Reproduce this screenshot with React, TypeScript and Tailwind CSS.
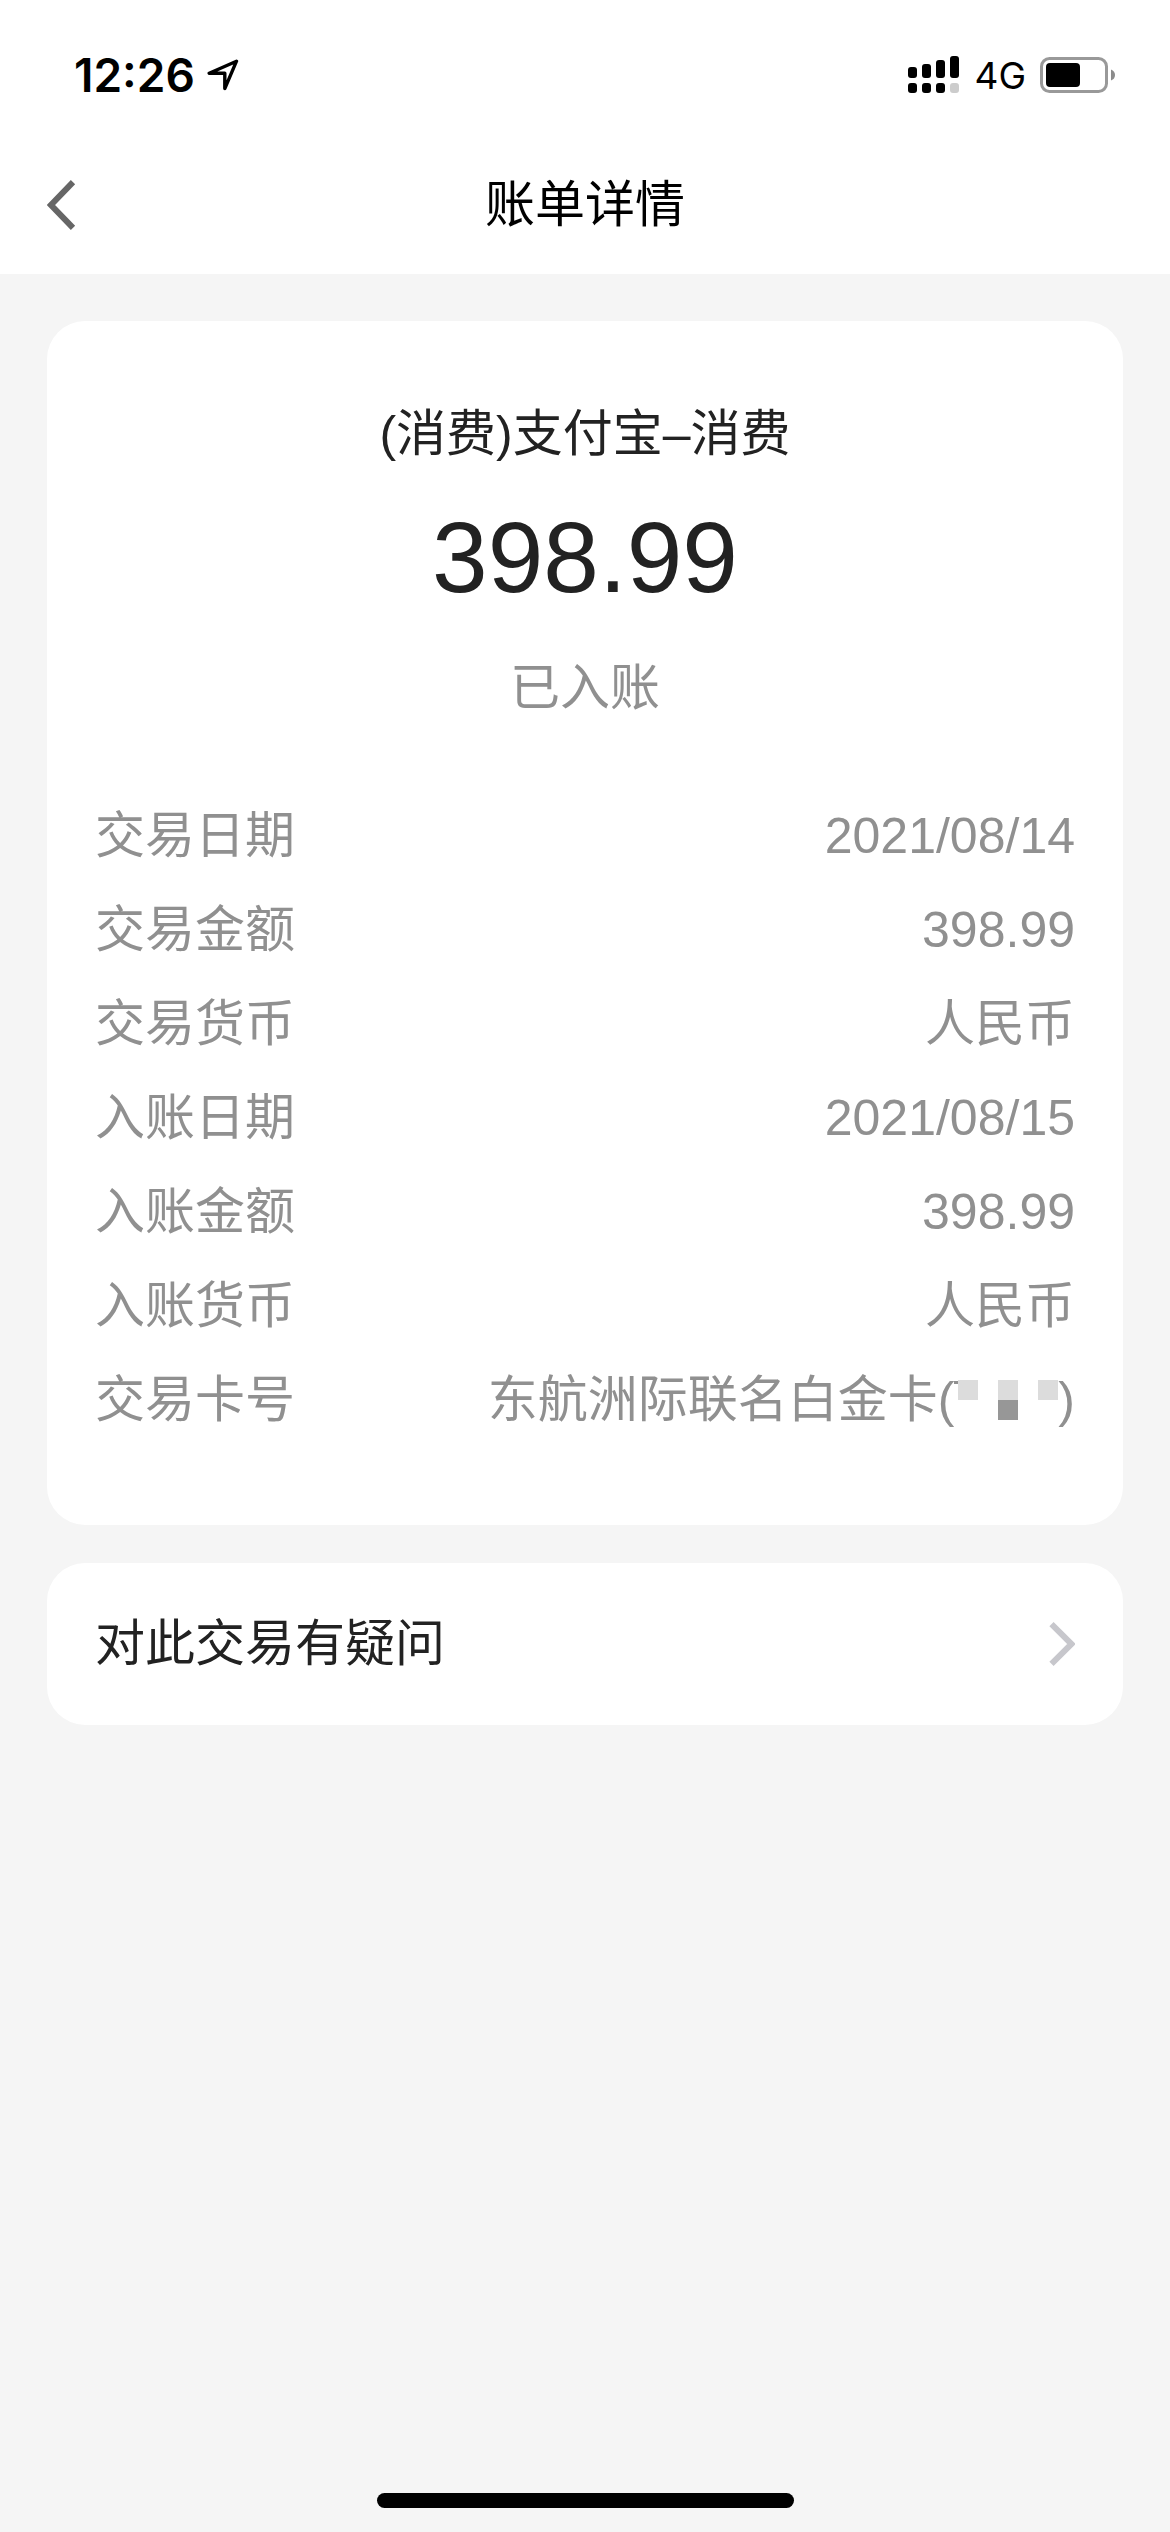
import React from "react";

const details = [
  { label: "交易日期", value: "2021/08/14" },
  { label: "交易金额", value: "398.99" },
  { label: "交易货币", value: "人民币" },
  { label: "入账日期", value: "2021/08/15" },
  { label: "入账金额", value: "398.99" },
  { label: "入账货币", value: "人民币" },
  { label: "交易卡号", value: "东航洲际联名白金卡", masked: true },
];

function StatusBar() {
  return (
    <div className="flex h-[136px] items-center justify-between pt-[14px] pr-[55px] pl-[74px] font-['Inter',sans-serif] text-black">
      <div className="flex items-center gap-3">
        <span className="text-[46px] leading-none font-semibold">12:26</span>
        <svg width="32" height="32" viewBox="0 0 32 32" fill="none" stroke="currentColor" strokeWidth="3.4" strokeLinejoin="round">
          <path d="M29.5 2.2 2.2 14.2H17.8V29.6Z" />
        </svg>
      </div>
      <div className="flex items-center gap-3.5">
        <svg width="52" height="38" viewBox="0 0 52 38" fill="currentColor">
          <rect x="0" y="11" width="9" height="11" rx="3" />
          <rect x="14" y="8" width="9" height="14" rx="3" />
          <rect x="28" y="4" width="9" height="18" rx="3" />
          <rect x="42" y="0" width="9" height="22" rx="3" />
          <rect x="0" y="27" width="9" height="10" rx="3" />
          <rect x="14" y="27" width="9" height="10" rx="3" />
          <rect x="28" y="27" width="9" height="10" rx="3" />
          <rect x="42" y="27" width="9" height="10" rx="3" fill="#cccccc" />
        </svg>
        <span className="text-[37px] leading-none">4G</span>
        <svg width="75" height="36" viewBox="0 0 75 36">
          <rect x="1.5" y="1.5" width="65" height="33" rx="8" fill="none" stroke="#999999" strokeWidth="3" />
          <rect x="6" y="6" width="34" height="24" rx="4" fill="#000000" />
          <path d="M71 12.5Q75 14 75 18Q75 22 71 23.5Z" fill="#8c8c8c" />
        </svg>
      </div>
    </div>
  );
}

function MaskedNumber() {
  return (
    <svg className="inline-block" width="104" height="40" viewBox="0 0 104 40" aria-hidden="true">
      <path d="M-2 1H6V4H-1Z" fill="#909090" />
      <rect x="4" y="0" width="20" height="20" fill="#dcdcdc" />
      <rect x="44" y="0" width="20" height="20" fill="#dcdcdc" />
      <rect x="44" y="20" width="20" height="20" fill="#979797" />
      <rect x="84" y="0" width="20" height="20" fill="#dcdcdc" />
    </svg>
  );
}

export default function App() {
  return (
    <div className="flex min-h-screen flex-col bg-[#f5f5f5] font-['Liberation_Sans','Noto_Sans_CJK_SC',sans-serif] text-[50px] text-[#222222]">
      <header className="bg-white">
        <StatusBar />
        <nav className="grid h-[138px] grid-cols-[1fr_auto_1fr] items-center px-[47px]">
          <button type="button" aria-label="返回" className="justify-self-start">
            <svg width="29" height="50" viewBox="0 0 29 50" fill="none" stroke="#666666" strokeWidth="6">
              <path d="M26 2.2 4 25 26 47.8" />
            </svg>
          </button>
          <h1 className="leading-[70px] text-black">账单详情</h1>
        </nav>
      </header>

      <main className="flex flex-col gap-[38px] px-[47px] pt-[47px]">
        <section className="rounded-[38px] bg-white px-12 py-[78px]">
          <div className="text-center">
            <p className="leading-[70px]">(消费)支付宝–消费</p>
            <p className="mt-7 text-[100px] leading-[120px]">398.99</p>
            <p className="mt-9 leading-[70px] text-[#909090]">已入账</p>
          </div>
          <dl className="mt-[66px] text-[#909090]">
            {details.map((d) => (
              <div key={d.label} className="flex justify-between leading-[94px]">
                <dt>{d.label}</dt>
                <dd className="flex items-center">
                  {d.value}
                  {d.masked && (
                    <>
                      <span>(</span>
                      <MaskedNumber />
                      <span>)</span>
                    </>
                  )}
                </dd>
              </div>
            ))}
          </dl>
        </section>

        <button type="button" className="flex h-[162px] items-center justify-between rounded-[38px] bg-white px-12 text-left">
          <span className="leading-[70px]">对此交易有疑问</span>
          <svg width="26" height="44" viewBox="0 0 26 44" fill="none" stroke="#c7c7cc" strokeWidth="6">
            <path d="M2.5 2.2 22.5 22 2.5 41.8" />
          </svg>
        </button>
      </main>

      <footer className="mt-auto flex justify-center pb-6">
        <div className="h-[15px] w-[417px] rounded-full bg-black" />
      </footer>
    </div>
  );
}
